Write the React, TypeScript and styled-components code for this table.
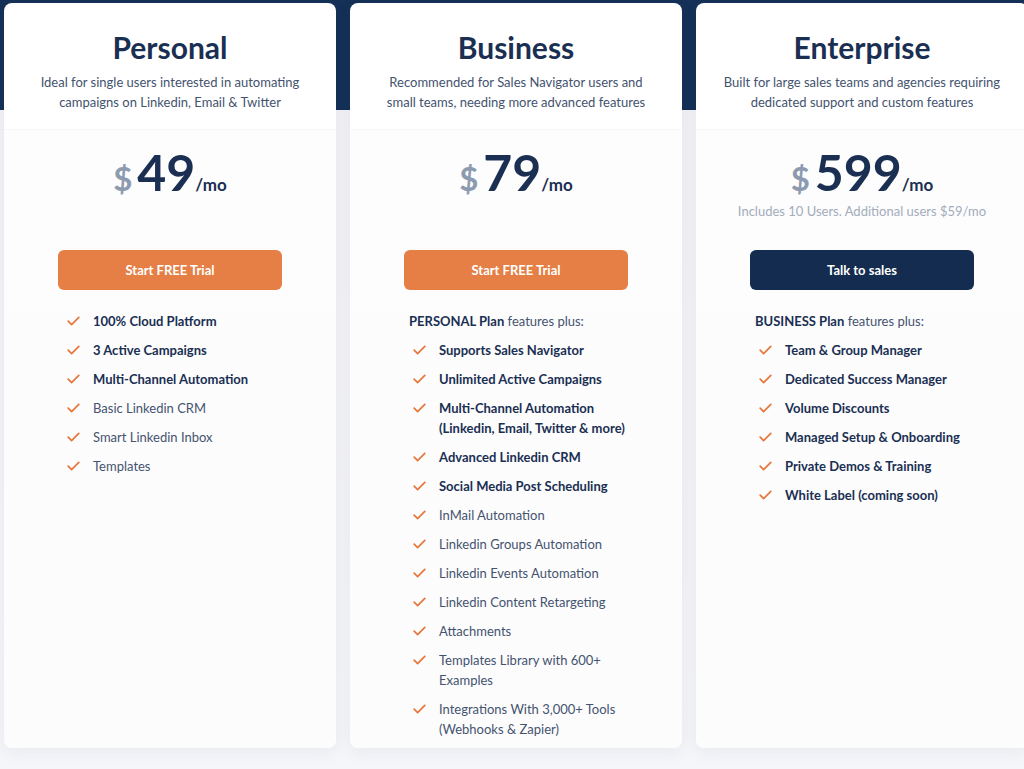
import React from "react";
import styled, { createGlobalStyle } from "styled-components";

const Global = createGlobalStyle`
  html, body { margin: 0; padding: 0; }
  body {
    background: #f5f5f9;
    font-family: "Lato", "Open Sans", sans-serif;
    -webkit-font-smoothing: antialiased;
  }
`;

const Page = styled.div`
  width: 1024px;
  height: 769px;
  overflow: hidden;
  background: linear-gradient(#163157 0, #163157 110px, #f2f2f6 110px, #f5f6f9 100%);
`;

const Row = styled.div`
  display: flex;
  gap: 14px;
  padding: 3px 0 0 4px;
`;

const Card = styled.section`
  flex: 0 0 332px;
  height: 745px;
  background: #fff;
  border-radius: 8px;
  box-shadow: 0 4px 18px rgba(30, 40, 80, 0.06);
  display: flex;
  flex-direction: column;
  overflow: hidden;
`;

const Header = styled.header`
  height: 127px;
  box-sizing: border-box;
  padding-top: 26px;
  text-align: center;
  border-bottom: 1px solid #f5f6f8;
`;

const Title = styled.h2`
  margin: 0;
  font-size: 30px;
  line-height: 36px;
  font-weight: 700;
  color: #1a2f52;
`;

const Desc = styled.p`
  margin: 7px 0 0;
  font-size: 13px;
  line-height: 20px;
  color: #44536e;
`;

const Body = styled.div`
  padding: 0 54px;
  background: linear-gradient(#fdfdfe, #fcfcfd);
  flex: 1;
`;

const PriceBlock = styled.div`
  height: 120px;
  box-sizing: border-box;
  padding-top: 17px;
  text-align: center;
`;

const Price = styled.div`
  display: flex;
  justify-content: center;
  align-items: baseline;
  height: 54px;
  line-height: 50px;
  color: #1a2f52;
`;

const Dollar = styled.span`
  font-size: 33px;
  font-weight: 700;
  color: #8d9bb0;
  margin-right: 5px;
`;

const Amount = styled.span`
  font-size: 50px;
  font-weight: 700;
`;

const Per = styled.span`
  font-size: 17px;
  font-weight: 700;
`;

const Note = styled.div`
  margin: 0 -30px;
  white-space: nowrap;
  font-size: 13px;
  line-height: 20px;
  color: #a3acbb;
`;

const Button = styled.button<{ $dark?: boolean }>`
  display: block;
  width: 100%;
  height: 40px;
  border: none;
  border-radius: 6px;
  background: ${(p) => (p.$dark ? "#132c4f" : "#e57f45")};
  color: #fff;
  font-family: inherit;
  font-size: 13px;
  font-weight: 700;
  cursor: pointer;
`;

const List = styled.ul`
  list-style: none;
  margin: 21px 0 0;
  padding: 0 0 0 5px;
  display: flex;
  flex-direction: column;
  gap: 9px;
`;

const Intro = styled.li`
  font-size: 13px;
  line-height: 20px;
  color: #44536e;
  b { color: #1a2f52; font-weight: 700; }
`;

const Item = styled.li<{ $bold?: boolean }>`
  display: flex;
  gap: 13px;
  margin-left: 4px;
  font-size: 13px;
  line-height: 20px;
  font-weight: ${(p) => (p.$bold ? 700 : 400)};
  color: ${(p) => (p.$bold ? "#1a2f52" : "#44536e")};
`;

const CheckIcon = styled.svg`
  flex: 0 0 13px;
  width: 13px;
  height: 10px;
  margin-top: 5px;
`;

const Check = () => (
  <CheckIcon viewBox="0 0 13 10" fill="none">
    <path d="M1.2 5.2 L4.6 8.6 L11.8 1.4" stroke="#e8763a" strokeWidth="1.7" strokeLinecap="round" strokeLinejoin="round" />
  </CheckIcon>
);

type Feature = { text: React.ReactNode; bold?: boolean };

type Plan = {
  name: string;
  desc: React.ReactNode;
  price: string;
  note?: string;
  cta: string;
  dark?: boolean;
  intro?: string;
  features: Feature[];
};

const plans: Plan[] = [
  {
    name: "Personal",
    desc: (
      <>
        Ideal for single users interested in automating
        <br />
        campaigns on Linkedin, Email &amp; Twitter
      </>
    ),
    price: "49",
    cta: "Start FREE Trial",
    features: [
      { text: "100% Cloud Platform", bold: true },
      { text: "3 Active Campaigns", bold: true },
      { text: "Multi-Channel Automation", bold: true },
      { text: "Basic Linkedin CRM" },
      { text: "Smart Linkedin Inbox" },
      { text: "Templates" },
    ],
  },
  {
    name: "Business",
    desc: (
      <>
        Recommended for Sales Navigator users and
        <br />
        small teams, needing more advanced features
      </>
    ),
    price: "79",
    cta: "Start FREE Trial",
    intro: "PERSONAL Plan",
    features: [
      { text: "Supports Sales Navigator", bold: true },
      { text: "Unlimited Active Campaigns", bold: true },
      {
        text: (
          <>
            Multi-Channel Automation
            <br />
            (Linkedin, Email, Twitter &amp; more)
          </>
        ),
        bold: true,
      },
      { text: "Advanced Linkedin CRM", bold: true },
      { text: "Social Media Post Scheduling", bold: true },
      { text: "InMail Automation" },
      { text: "Linkedin Groups Automation" },
      { text: "Linkedin Events Automation" },
      { text: "Linkedin Content Retargeting" },
      { text: "Attachments" },
      {
        text: (
          <>
            Templates Library with 600+
            <br />
            Examples
          </>
        ),
      },
      {
        text: (
          <>
            Integrations With 3,000+ Tools
            <br />
            (Webhooks &amp; Zapier)
          </>
        ),
      },
    ],
  },
  {
    name: "Enterprise",
    desc: (
      <>
        Built for large sales teams and agencies requiring
        <br />
        dedicated support and custom features
      </>
    ),
    price: "599",
    note: "Includes 10 Users. Additional users $59/mo",
    cta: "Talk to sales",
    dark: true,
    intro: "BUSINESS Plan",
    features: [
      { text: "Team & Group Manager", bold: true },
      { text: "Dedicated Success Manager", bold: true },
      { text: "Volume Discounts", bold: true },
      { text: "Managed Setup & Onboarding", bold: true },
      { text: "Private Demos & Training", bold: true },
      { text: "White Label (coming soon)", bold: true },
    ],
  },
];

export default function App() {
  return (
    <>
      <Global />
      <Page>
        <Row>
          {plans.map((p) => (
            <Card key={p.name}>
              <Header>
                <Title>{p.name}</Title>
                <Desc>{p.desc}</Desc>
              </Header>
              <Body>
                <PriceBlock>
                  <Price>
                    <Dollar>$</Dollar>
                    <Amount>{p.price}</Amount>
                    <Per>/mo</Per>
                  </Price>
                  {p.note && <Note>{p.note}</Note>}
                </PriceBlock>
                <Button $dark={p.dark}>{p.cta}</Button>
                <List>
                  {p.intro && (
                    <Intro>
                      <b>{p.intro}</b> features plus:
                    </Intro>
                  )}
                  {p.features.map((f, i) => (
                    <Item key={i} $bold={f.bold}>
                      <Check />
                      <span>{f.text}</span>
                    </Item>
                  ))}
                </List>
              </Body>
            </Card>
          ))}
        </Row>
      </Page>
    </>
  );
}
